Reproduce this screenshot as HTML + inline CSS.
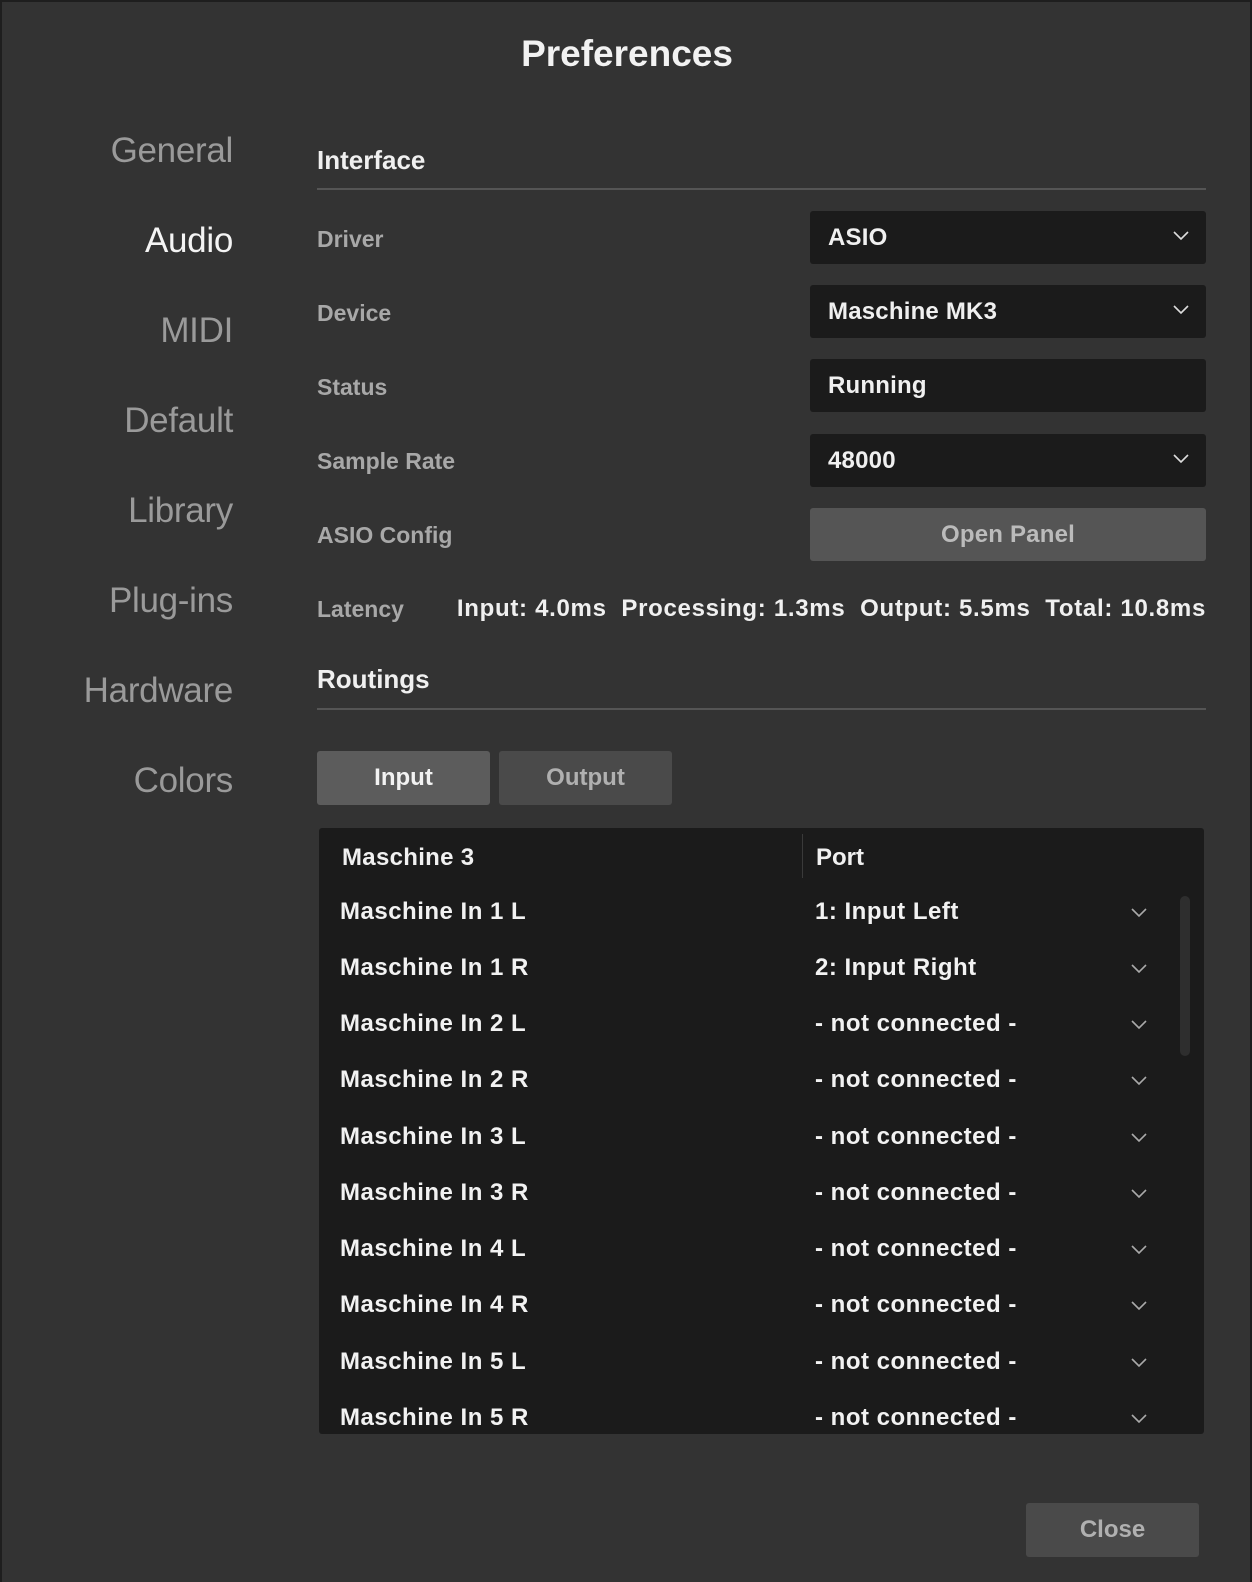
<!DOCTYPE html>
<html><head><meta charset="utf-8"><style>
*{margin:0;padding:0;box-sizing:border-box}
body{width:1252px;height:1582px;background:#1e1e1e;font-family:"Liberation Sans",sans-serif;position:relative;overflow:hidden}
#win{position:absolute;left:2px;top:2px;width:1248px;height:1580px;background:#333333}
.a{position:absolute;white-space:nowrap}
.nav{position:absolute;right:1019px;font-size:35px;color:#9a9a9a;letter-spacing:-0.3px}
.lbl{position:absolute;left:317px;font-size:23px;color:#a8a8a8;font-weight:bold;letter-spacing:0}
.box{position:absolute;left:810px;width:396px;height:53px;background:#1b1b1b;border-radius:3px;color:#f0f0f0;font-size:24px;line-height:53px;padding-left:18px;font-weight:bold;letter-spacing:0.2px}
.chev{position:absolute;right:16px;top:19px}
.row{position:absolute;left:0;width:100%;font-size:24px;color:#f2f2f2;font-weight:bold;letter-spacing:0.5px}
.row .n{position:absolute;left:21px}
.row .p{position:absolute;left:496px}
.row svg{position:absolute;left:810px;top:8px}
</style></head><body>
<div id="win"></div>
<div class="a" style="left:0;width:1252px;text-align:center;top:33px;font-size:37px;color:#f2f2f2;padding-left:2px;font-weight:bold">Preferences</div>

<div class="nav" style="top:131px">General</div>
<div class="nav" style="top:221px;color:#f4f4f4">Audio</div>
<div class="nav" style="top:311px">MIDI</div>
<div class="nav" style="top:401px">Default</div>
<div class="nav" style="top:491px">Library</div>
<div class="nav" style="top:581px">Plug-ins</div>
<div class="nav" style="top:671px">Hardware</div>
<div class="nav" style="top:761px">Colors</div>

<div class="a" style="left:317px;top:145px;font-size:26px;color:#f0f0f0;font-weight:bold">Interface</div>
<div class="a" style="left:317px;top:188px;width:889px;height:2px;background:#555"></div>

<div class="lbl" style="top:226px">Driver</div>
<div class="lbl" style="top:300px">Device</div>
<div class="lbl" style="top:374px">Status</div>
<div class="lbl" style="top:448px">Sample Rate</div>
<div class="lbl" style="top:522px">ASIO Config</div>
<div class="lbl" style="top:596px">Latency</div>

<div class="box" style="top:211px">ASIO<svg class="chev" width="18" height="12" viewBox="0 0 18 12"><path d="M2 2 L9 9 L16 2" fill="none" stroke="#ddd" stroke-width="1.6"/></svg></div>
<div class="box" style="top:285px">Maschine MK3<svg class="chev" width="18" height="12" viewBox="0 0 18 12"><path d="M2 2 L9 9 L16 2" fill="none" stroke="#ddd" stroke-width="1.6"/></svg></div>
<div class="box" style="top:359px">Running</div>
<div class="box" style="top:434px">48000<svg class="chev" width="18" height="12" viewBox="0 0 18 12"><path d="M2 2 L9 9 L16 2" fill="none" stroke="#ddd" stroke-width="1.6"/></svg></div>
<div class="box" style="top:508px;background:#555;color:#bbb;text-align:center;padding-left:0">Open Panel</div>

<div class="a" style="right:46px;top:595px;font-size:24px;color:#f0f0f0;font-weight:bold;letter-spacing:0.7px">Input: 4.0ms&nbsp; Processing: 1.3ms&nbsp; Output: 5.5ms&nbsp; Total: 10.8ms</div>

<div class="a" style="left:317px;top:664px;font-size:26px;color:#f0f0f0;font-weight:bold">Routings</div>
<div class="a" style="left:317px;top:708px;width:889px;height:2px;background:#555"></div>

<div class="a" style="left:317px;top:751px;width:173px;height:54px;background:#5c5c5c;border-radius:3px;color:#f2f2f2;font-size:24px;line-height:54px;text-align:center;font-weight:bold">Input</div>
<div class="a" style="left:499px;top:751px;width:173px;height:54px;background:#4a4a4a;border-radius:3px;color:#b0b0b0;font-size:24px;line-height:54px;text-align:center;font-weight:bold">Output</div>

<div class="a" style="left:319px;top:828px;width:885px;height:606px;background:#1b1b1b;border-radius:3px;overflow:hidden">
  <div class="a" style="left:23px;top:16px;font-size:24px;color:#f0f0f0;font-weight:bold;letter-spacing:0.3px">Maschine 3</div>
  <div class="a" style="left:483px;top:6px;width:1px;height:44px;background:#3a3a3a"></div>
  <div class="a" style="left:497px;top:16px;font-size:24px;color:#f0f0f0;font-weight:bold">Port</div>
  <div class="a" style="left:861px;top:68px;width:10px;height:160px;background:#2e2e2e;border-radius:5px"></div>
  <div class="row" style="top:70px"><span class="n">Maschine In 1 L</span><span class="p">1: Input Left</span><svg width="20" height="14" viewBox="0 0 20 14"><path d="M3 3 L10 10 L17 3" fill="none" stroke="#aaa" stroke-width="1.6"/></svg></div>
  <div class="row" style="top:126px"><span class="n">Maschine In 1 R</span><span class="p">2: Input Right</span><svg width="20" height="14" viewBox="0 0 20 14"><path d="M3 3 L10 10 L17 3" fill="none" stroke="#aaa" stroke-width="1.6"/></svg></div>
  <div class="row" style="top:182px"><span class="n">Maschine In 2 L</span><span class="p">- not connected -</span><svg width="20" height="14" viewBox="0 0 20 14"><path d="M3 3 L10 10 L17 3" fill="none" stroke="#aaa" stroke-width="1.6"/></svg></div>
  <div class="row" style="top:238px"><span class="n">Maschine In 2 R</span><span class="p">- not connected -</span><svg width="20" height="14" viewBox="0 0 20 14"><path d="M3 3 L10 10 L17 3" fill="none" stroke="#aaa" stroke-width="1.6"/></svg></div>
  <div class="row" style="top:295px"><span class="n">Maschine In 3 L</span><span class="p">- not connected -</span><svg width="20" height="14" viewBox="0 0 20 14"><path d="M3 3 L10 10 L17 3" fill="none" stroke="#aaa" stroke-width="1.6"/></svg></div>
  <div class="row" style="top:351px"><span class="n">Maschine In 3 R</span><span class="p">- not connected -</span><svg width="20" height="14" viewBox="0 0 20 14"><path d="M3 3 L10 10 L17 3" fill="none" stroke="#aaa" stroke-width="1.6"/></svg></div>
  <div class="row" style="top:407px"><span class="n">Maschine In 4 L</span><span class="p">- not connected -</span><svg width="20" height="14" viewBox="0 0 20 14"><path d="M3 3 L10 10 L17 3" fill="none" stroke="#aaa" stroke-width="1.6"/></svg></div>
  <div class="row" style="top:463px"><span class="n">Maschine In 4 R</span><span class="p">- not connected -</span><svg width="20" height="14" viewBox="0 0 20 14"><path d="M3 3 L10 10 L17 3" fill="none" stroke="#aaa" stroke-width="1.6"/></svg></div>
  <div class="row" style="top:520px"><span class="n">Maschine In 5 L</span><span class="p">- not connected -</span><svg width="20" height="14" viewBox="0 0 20 14"><path d="M3 3 L10 10 L17 3" fill="none" stroke="#aaa" stroke-width="1.6"/></svg></div>
  <div class="row" style="top:576px"><span class="n">Maschine In 5 R</span><span class="p">- not connected -</span><svg width="20" height="14" viewBox="0 0 20 14"><path d="M3 3 L10 10 L17 3" fill="none" stroke="#aaa" stroke-width="1.6"/></svg></div>
</div>

<div class="a" style="left:1026px;top:1503px;width:173px;height:54px;background:#4a4a4a;border-radius:3px;color:#b0b0b0;font-size:24px;line-height:54px;text-align:center;font-weight:bold">Close</div>
</body></html>
